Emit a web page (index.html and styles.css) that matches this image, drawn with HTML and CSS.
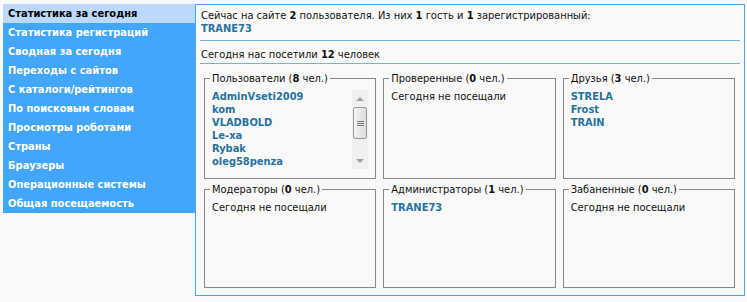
FILE: index.html
```html
<!DOCTYPE html>
<html lang="ru">
<head>
    <meta charset="UTF-8">
    <title>Статистика за сегодня</title>
    <link rel="stylesheet" href="styles.css">
</head>
<body>
    <div class="page">
        <ul class="menu">
            <li class="active">Статистика за сегодня</li>
            <li>Статистика регистраций</li>
            <li>Сводная за сегодня</li>
            <li>Переходы с сайтов</li>
            <li>С каталоги/рейтингов</li>
            <li>По поисковым словам</li>
            <li>Просмотры роботами</li>
            <li>Страны</li>
            <li>Браузеры</li>
            <li>Операционные системы</li>
            <li>Общая посещаемость</li>
        </ul>

        <div class="panel">
            <div class="online">
                Сейчас на сайте <b>2</b> пользователя. Из них <b>1</b> гость и <b>1</b> зарегистрированный:<br>
                <a class="user">TRANE73</a>
            </div>
            <div class="today">Сегодня нас посетили <b>12</b> человек</div>

            <div class="groups">
                <fieldset>
                    <legend>Пользователи (<b>8</b> чел.)</legend>
                    <div class="scroll-list">
                        <div class="list">
                            <a class="user">AdminVseti2009</a>
                            <a class="user">kom</a>
                            <a class="user">VLADBOLD</a>
                            <a class="user">Le-xa</a>
                            <a class="user">Rybak</a>
                            <a class="user">oleg58penza</a>
                        </div>
                        <div class="scrollbar">
                            <div class="arrow up"></div>
                            <div class="track"><div class="thumb"><span></span><span></span><span></span></div></div>
                            <div class="arrow down"></div>
                        </div>
                    </div>
                </fieldset>
                <fieldset>
                    <legend>Проверенные (<b>0</b> чел.)</legend>
                    <div class="empty">Сегодня не посещали</div>
                </fieldset>
                <fieldset>
                    <legend>Друзья (<b>3</b> чел.)</legend>
                    <a class="user">STRELA</a>
                    <a class="user">Frost</a>
                    <a class="user">TRAIN</a>
                </fieldset>
                <fieldset>
                    <legend>Модераторы (<b>0</b> чел.)</legend>
                    <div class="empty">Сегодня не посещали</div>
                </fieldset>
                <fieldset>
                    <legend>Администраторы (<b>1</b> чел.)</legend>
                    <a class="user">TRANE73</a>
                </fieldset>
                <fieldset>
                    <legend>Забаненные (<b>0</b> чел.)</legend>
                    <div class="empty">Сегодня не посещали</div>
                </fieldset>
            </div>
        </div>
    </div>
</body>
</html>
```

FILE: styles.css
```css
/* General Styling */
body {
    margin: 0;
    padding: 4px 2px 0 3px;
    background-color: #f9f9f9;
    font-family: Tahoma, "DejaVu Sans Condensed", "Liberation Sans", sans-serif;
    font-size: 11px;
    line-height: 13px;
    color: #111;
}

.page {
    display: flex;
    align-items: flex-start;
}

/* Left menu */
.menu {
    list-style: none;
    margin: 0;
    padding: 0;
    width: 192px;
    background-color: #42a6fb;
}

.menu li {
    height: 19px;
    line-height: 19px;
    padding-left: 5px;
    font-weight: bold;
    color: white;
    white-space: nowrap;
}

.menu li.active {
    background-color: #bcd9fd;
    color: #000;
}

/* Right panel */
.panel {
    flex: 1;
    height: 290px;
    border: 1px solid #4aa3f5;
}

.online {
    margin: 0 4px;
    padding: 4px 1px 5px;
    border-bottom: 1px solid #6cb4f0;
}

.today {
    margin: 0 4px;
    padding: 7px 1px 2px;
    border-bottom: 1px solid #6cb4f0;
}

.user {
    display: block;
    font-weight: bold;
    color: #26729f;
}

.groups {
    display: grid;
    grid-template-columns: repeat(3, 1fr);
    grid-template-rows: 107px 105px;
    column-gap: 7px;
    row-gap: 4px;
    margin: 8px 9px 0 8px;
}

fieldset {
    margin: 0;
    padding: 5px 7px 0;
    border: 1px solid #888;
    min-width: 0;
}

legend {
    padding: 0 2px;
    margin-left: -2px;
}

/* Scrolling user list */
.scroll-list {
    display: flex;
    height: 79px;
}

.list {
    flex: 1;
    overflow: hidden;
}

.scrollbar {
    width: 16px;
    display: flex;
    flex-direction: column;
    background-color: #f0f0f0;
}

.arrow {
    height: 17px;
    display: flex;
    align-items: center;
    justify-content: center;
}

.arrow::before {
    content: "";
    border-left: 4px solid transparent;
    border-right: 4px solid transparent;
}

.arrow.up::before {
    border-bottom: 4px solid #a0a0a0;
}

.arrow.down::before {
    border-top: 4px solid #a0a0a0;
}

.track {
    flex: 1;
}

.thumb {
    height: 30px;
    margin: 0 1px;
    border: 1px solid #9a9a9a;
    border-radius: 2px;
    background: linear-gradient(to right, #f4f4f4, #dcdcdc);
    display: flex;
    flex-direction: column;
    justify-content: center;
    align-items: center;
    gap: 1px;
}

.thumb span {
    width: 7px;
    height: 1px;
    background-color: #777;
}
```
